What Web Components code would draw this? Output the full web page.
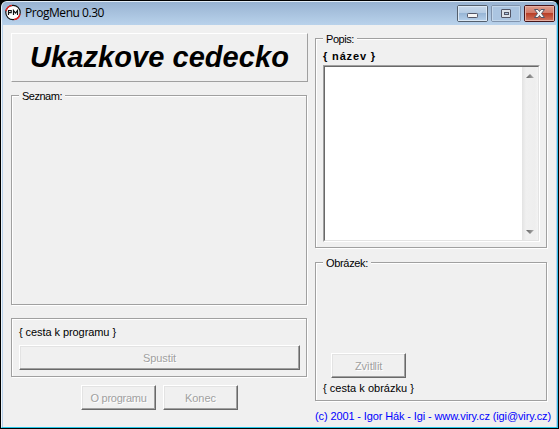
<!DOCTYPE html>
<html lang="cs"><head><meta charset="utf-8"><title>ProgMenu 0.30</title>
<style>html,body{margin:0;background:#000;overflow:hidden}
body{font:11px/14px "Liberation Sans",Arial,sans-serif}
.cols{display:flex;gap:7px;padding:8px 0 0 8px}
.left{width:297px}.right{width:233px;padding-top:5px}
.seznam{height:211px;margin-top:13px}
.run{height:60px;margin-top:12px}
.btns{display:flex;gap:7px;margin:7px 0 0 70px}
.popis{height:211px}.obr{height:140px;margin-top:13px}
.copy{margin-top:7px;color:#00f}
</style></head><body>
<app-window caption="ProgMenu 0.30">
 <div class="cols">
  <div class="left">
   <banner-panel>Ukazkove cedecko</banner-panel>
   <group-box class="seznam" legend="Seznam:" lw="40"></group-box>
   <group-box class="run"><fit-text w="97" style="margin:7px 0 0 7px">{ cesta k programu }</fit-text>
    <push-button style="width:281px;margin:6px 0 0 7px" w="33">Spustit</push-button></group-box>
   <div class="btns"><push-button w="56" style="width:75px">O programu</push-button><push-button w="31" style="width:75px">Konec</push-button></div>
  </div>
  <div class="right">
   <group-box class="popis" legend="Popis:" lw="28"><fit-text w="53" style="margin:11px 0 0 7px;font-weight:bold">{ název }</fit-text><memo-box></memo-box></group-box>
   <group-box class="obr" legend="Obrázek:" lw="42"><push-button w="27" style="width:75px;margin:91px 0 0 15px">Zvìt‖it</push-button><fit-text w="91" style="margin:3px 0 0 7px">{ cesta k obrázku }</fit-text></group-box>
   <fit-text class="copy" w="236">(c) 2001 - Igor Hák - Igi - www.viry.cz (igi@viry.cz)</fit-text>
  </div>
 </div>
</app-window>
<script>
const define=(name,html,init)=>customElements.define(name,class extends HTMLElement{
 connectedCallback(){ if(this.shadowRoot)return; this.attachShadow({mode:'open'}).innerHTML=html; if(init)init(this,this.shadowRoot); }
});
// Sets a fit-text's content and spreads its letters over the width.
const fill=(f,text,w)=>{f.textContent=text;const s=f.shadowRoot.querySelector('span');s.style.letterSpacing='0';s.style.letterSpacing=((w-s.getBoundingClientRect().width)/text.length)+'px'};
define('fit-text','<style>:host{display:block;height:14px;line-height:14px;white-space:pre}span{display:inline-block}</style><span><slot></slot></span>',(el)=>{
 if(el.hasAttribute('w')&&el.textContent)fill(el,el.textContent,+el.getAttribute('w'));
});
define('app-window',`<style>
:host{display:block;box-sizing:border-box;width:559px;height:429px;padding:1px;background:#000;color:#000}
.w{box-sizing:border-box;width:557px;height:427px;border:1px solid;border-color:#e2edf7 #35bde8 #25c6e8 #edf5fb;border-radius:6px 6px 0 0;background:#b9d1ea;padding:0 1px;overflow:hidden}
header{height:23px;display:flex;background:linear-gradient(#98b3d2,#b9d2eb);margin:0 -1px;padding-left:3px}
.logo{margin-top:2px;width:16px;height:18px}.cap{font:12px/22px "Open Sans","Noto Sans",sans-serif;margin-left:4px;height:22px}
.b{display:flex;gap:3px;margin:3px 2px 0 auto}
.b svg{display:block}
main{height:402px;background:#f0f0f0;overflow:hidden}
</style><div class="w"><header>
<svg class="logo" viewBox="0 0 16 18"><circle cx="8" cy="8.5" r="7.2" fill="#fff" stroke="#111" stroke-width="1.2"/><path d="M1 7a7.2 7.2 0 0 1 6-5.7M15 10a7.2 7.2 0 0 1-6 5.7" fill="none" stroke="#e22" stroke-width="1.3"/><path d="M3.5 11V6.5h2.7v2.2H4M8.5 11V6.5l2 2.5 2-2.5V11" fill="none" stroke="#111" stroke-width="1.2"/></svg>
<fit-text class="cap"></fit-text>
<div class="b">
<svg width="31" height="17"><defs><linearGradient id="g" x2="0" y2="1"><stop offset="0" stop-color="#c8d9eb"/><stop offset=".48" stop-color="#b5cbe3"/><stop offset=".5" stop-color="#98b6d6"/><stop offset="1" stop-color="#b8d2ec"/></linearGradient></defs><rect x=".5" y=".5" width="30" height="16" rx="1.5" fill="url(#g)" stroke="#535f6d"/><rect x="1.5" y="1.5" width="28" height="14" fill="none" stroke="#dbe8f5"/><rect x="10.5" y="8.5" width="10" height="4" rx=".8" fill="#f5f5f5" stroke="#535666"/></svg>
<svg width="30" height="17"><rect x=".5" y=".5" width="29" height="16" rx="1.5" fill="#abc5e1" stroke="#8093ac"/><rect x="1.5" y="1.5" width="27" height="14" fill="none" stroke="#c3d7eb"/><rect x="10.5" y="4.5" width="9" height="8" rx=".5" fill="#dce2e9" stroke="#535666"/><rect x="13.5" y="7.5" width="4" height="2" fill="#abc5e1" stroke="#535666"/></svg>
<svg width="31" height="17"><defs><linearGradient id="r" x2="0" y2="1"><stop offset="0" stop-color="#dfa08f"/><stop offset=".48" stop-color="#d17867"/><stop offset=".5" stop-color="#b93f28"/><stop offset="1" stop-color="#d27a65"/></linearGradient></defs><rect x=".5" y=".5" width="30" height="16" rx="1.5" fill="url(#r)" stroke="#45151a"/><rect x="1.5" y="1.5" width="28" height="14" fill="none" stroke="#e6afa3"/><path d="M10.5 4.5h3.5l1.5 2 1.5-2h3.5l-3 4 3 4H17l-1.5-2-1.5 2h-3.5l3-4z" fill="#f5f5f5" stroke="#535666"/></svg>
</div></header><main><slot></slot></main></div>`,(el,r)=>fill(r.querySelector('.cap'),el.getAttribute('caption'),79));
define('banner-panel','<style>:host{display:block;box-sizing:border-box;height:49px;border:1px solid;border-color:#fff #a0a0a0 #a0a0a0 #fff;font:italic bold 29px/47px "Liberation Sans",Arial,sans-serif;padding-left:18px}fit-text{height:47px;line-height:47px}</style><fit-text></fit-text>',(el,r)=>fill(r.querySelector('fit-text'),el.textContent,259));
define('group-box',`<style>:host{display:block;box-sizing:border-box;position:relative}
.o,.i{position:absolute;box-sizing:border-box;border:1px solid #fff;inset:1px 0 0 1px}.o{border-color:#a0a0a0;inset:0 1px 1px 0}
.l{position:absolute;left:8px;top:-6px;padding:0 3px;background:#f0f0f0}.l:empty{display:none}
.c{position:relative;display:flow-root;padding:0 0 0 1px}</style><div class="i"></div><div class="o"></div><div class="l"></div><div class="c"><slot></slot></div>`,(el,r)=>{
 if(el.getAttribute('legend')){const l=document.createElement('fit-text');r.querySelector('.l').append(l);fill(l,el.getAttribute('legend'),+el.getAttribute('lw'))}});
define('push-button','<style>:host{display:flex;box-sizing:border-box;height:25px;align-items:center;justify-content:center;border:1px solid;border-color:#fff #696969 #696969 #fff;box-shadow:inset -1px -1px #a0a0a0,inset 1px 1px #e3e3e3;color:#a0a0a0;text-shadow:1px 1px #fff}</style><fit-text></fit-text>',(el,r)=>fill(r.querySelector('fit-text'),el.textContent,+el.getAttribute('w')));
define('memo-box',`<style>:host{display:flex;box-sizing:border-box;width:217px;height:177px;margin:2px 0 0 7px;border:1px solid;border-color:#a0a0a0 #fff #fff #a0a0a0}
.in{flex:1;display:flex;justify-content:flex-end;background:#fff;border:1px solid;border-color:#696969 #e3e3e3 #e3e3e3 #696969}
.s{width:16px;background:linear-gradient(90deg,#e3e3e3,#f0f0f0 25%,#eee 80%,#f3f3f3);display:flex;flex-direction:column;justify-content:space-between;align-items:center;padding:7px 0 6px;box-sizing:border-box}svg{display:block}</style>
<div class="in"><div class="s"><svg width="8" height="4"><defs><linearGradient id="a"><stop stop-color="#606060"/><stop offset="1" stop-color="#b0b0b0"/></linearGradient></defs><path d="M0 4L4 0l4 4z" fill="url(#a)"/></svg><svg width="8" height="4"><path d="M0 0h8L4 4z" fill="url(#a)"/></svg></div></div>`);
</script></body></html>
